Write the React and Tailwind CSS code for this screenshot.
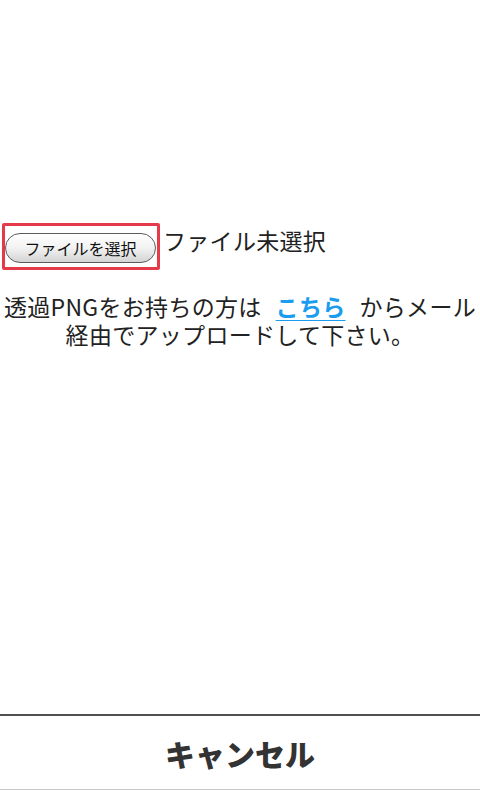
export default function App() {
  const font = { fontFamily: '"Noto Sans CJK JP", "Noto Sans", sans-serif' };
  return (
    <div className="w-[480px] h-[790px] bg-white flex flex-col text-[#222]" style={font}>
      <main className="flex-1 flex flex-col">
        <div className="flex items-start mt-[223px]">
          <div className="ml-[2px] border-[3px] border-[#e53a4a] rounded-[2px] pt-[7px] pb-[4px] pr-[1px] w-[158px] h-[47px]">
            <button className="w-[151px] h-[30px] rounded-full border border-[#5a5a5a] bg-gradient-to-b from-white via-[#f2f2f2] to-[#d4d4d4] text-[16px] leading-[28px] text-[#111] shadow-[inset_0_1px_0_#fff]">
              ファイルを選択
            </button>
          </div>
          <span className="ml-[3px] mt-[2px] text-[23px] leading-[30px] tracking-[0.3px]">ファイル未選択</span>
        </div>
        <p className="mt-[22px] text-center text-[23px] leading-[28px] px-[2px] tracking-[0.3px]">
          透過PNGをお持ちの方は
          <a href="#" className="mx-[14px] text-[#1a9cf0] font-bold underline underline-offset-[4px] decoration-[1px]">こちら</a>
          からメール
          <br />
          経由でアップロードして下さい。
        </p>
      </main>
      <footer className="h-[76px] border-t-2 border-t-[#505050] border-b border-b-[#c8c8c8] flex items-center justify-center">
        <span className="text-[30px] font-black text-[#333] leading-none">キャンセル</span>
      </footer>
    </div>
  );
}
